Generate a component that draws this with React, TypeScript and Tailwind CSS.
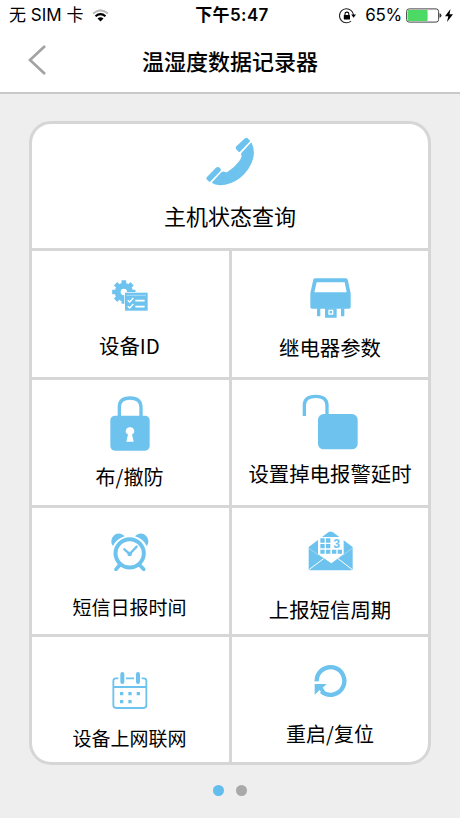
import type { ReactNode } from "react";

const BLUE = "#6dc3ee";

function PhoneIcon() {
    return (
        <svg className="w-[49px] h-[49px]" viewBox="48 51 147 147" fill={BLUE}>
            <path d="M184 67Q196 88 189 117Q180 149 150 174Q121 196 90 196Q74 195 65 188L94 157Q99 153 105 156Q111 158 117 152Q132 144 142 130Q154 117 155 108Q151 103 156 97Z" />
            <path d="M138 87Q135 83 139 79L165 55Q169 51 173 55L181 63L150 95Q147 97 144 94Z" />
            <path d="M51 179Q47 175 51 171L77 144Q83 138 89 143L92 147Q94 150 91 154L62 184Q59 187 56 184Z" />
        </svg>
    );
}

function DeviceIcon() {
    const teeth = [0, 45, 90, 135, 180, 225, 270, 315];
    return (
        <svg className="w-9 h-[31px]" viewBox="65 44 108 93">
            {teeth.map(a => (
                <rect key={a} x="93.5" y="45" width="14" height="14" rx="1" fill={BLUE} transform={`rotate(${a} 100.5 80)`} />
            ))}
            <circle cx="100.5" cy="80" r="18.5" fill="none" stroke={BLUE} strokeWidth="18" />
            <rect x="102" y="80" width="70" height="56" fill="#fff" />
            <rect x="104" y="82" width="68" height="54" fill={BLUE} />
            <path d="M108 90H167" stroke="#c9e9f9" strokeWidth="2" />
            <path d="M135 106H163M135 124H163" stroke="#fff" strokeWidth="5" />
            <path d="M112 105L118 110L129 98M112 123L118 128L129 116" fill="none" stroke="#fff" strokeWidth="4" />
        </svg>
    );
}

function RelayIcon() {
    return (
        <svg className="w-[41px] h-10" viewBox="61 38 123 120" fill={BLUE}>
            <path fillRule="evenodd" d="M76 39H168Q174 39 175 46L183 84V125Q183 130 178 130H67Q62 130 62 125V84L70 46Q71 39 76 39ZM81 51L74 81H171L165 51Z" />
            <path d="M82 129H92V153H82ZM154 129H164V153H154Z" />
            <path fillRule="evenodd" d="M106 129H141V157H106ZM116 133V148H131V133Z" />
            <rect x="120" y="137" width="7" height="7" />
        </svg>
    );
}

function LockIcon() {
    return (
        <svg className="w-10 h-[55px]" viewBox="59 34 120 165">
            <path d="M87 97V67Q87 40 119 40T152 67V97" fill="none" stroke={BLUE} strokeWidth="10" />
            <rect x="60" y="93" width="118" height="105" rx="14" fill={BLUE} />
            <path d="M119 128A11 11 0 0 1 125 149L130 171H108L113 149A11 11 0 0 1 119 128Z" fill="#fff" />
        </svg>
    );
}

function UnlockIcon() {
    return (
        <svg className="w-14 h-14" viewBox="37 27 168 168">
            <path d="M44 93V61Q44 34 78 34T112 61V92" fill="none" stroke={BLUE} strokeWidth="10" />
            <rect x="85" y="87" width="119" height="106" rx="17" fill={BLUE} />
        </svg>
    );
}

function AlarmIcon() {
    return (
        <svg className="w-[38px] h-[38px]" viewBox="64 40 114 114">
            <path d="M70 79Q60 67 69 52Q78 40 92 42Q101 44 105 50Q81 57 70 79Z" fill={BLUE} />
            <path d="M171 79Q181 67 172 52Q163 40 149 42Q140 44 136 50Q160 57 171 79Z" fill={BLUE} />
            <circle cx="120" cy="101" r="42.5" fill="none" stroke={BLUE} strokeWidth="12" />
            <path d="M90 136L79 149M150 136L162 149" stroke={BLUE} strokeWidth="11" strokeLinecap="round" />
            <path d="M104 89L120 103L141 81" fill="none" stroke={BLUE} strokeWidth="7" strokeLinecap="round" />
            <circle cx="120" cy="103" r="7" fill={BLUE} />
        </svg>
    );
}

function MailIcon() {
    return (
        <svg className="w-[45px] h-10" viewBox="53 34 135 120" fill={BLUE}>
            <path d="M55 82L114 38Q121 33 128 38L187 82V147Q187 152 182 152H60Q55 152 55 147Z" />
            <path d="M83 52H160V104L123 131L83 104Z" fill="#fff" />
            <path d="M57 149L100 117M185 149L143 117" stroke="#fff" strokeWidth="3" />
            <path d="M56 86L84 106M186 86L158 106" stroke="#fff" strokeWidth="2" opacity=".5" />
            <path d="M90 56H103V69H90ZM107 56H120V69H107ZM90 73H103V86H90ZM107 73H120V86H107ZM90 90H103V102H90ZM107 90H120V102H107ZM125 90H138V102H125ZM142 90H155V102H142Z" />
            <text x="129" y="84" fontSize="37" fontWeight="700" fontFamily="Liberation Sans, sans-serif">3</text>
        </svg>
    );
}

function CalendarIcon() {
    return (
        <svg className="w-9 h-[38px]" viewBox="65 52 108 114" fill="none" stroke={BLUE} strokeWidth="5.5">
            <path d="M84 71H76Q69 71 69 79V152Q69 160 77 160H160Q168 160 168 152V79Q168 71 161 71H154M107 71H131M69 97H168" />
            <path d="M96 58V82M143 58V82" strokeWidth="12" strokeLinecap="round" />
            <path d="M89 117H99M114 117H124M139 117H149M89 141H99M114 141H124" strokeWidth="10" />
        </svg>
    );
}

function RestartIcon() {
    return (
        <svg className="w-[33px] h-[34px]" viewBox="73 27 99 102">
            <path d="M81 79A41.5 41.5 0 1 1 95 109" fill="none" stroke={BLUE} strokeWidth="13" />
            <path d="M75 87H111L99 98L105 106L98 117L90 105L75 119Z" fill={BLUE} />
        </svg>
    );
}

function Tile({ icon, label, className, labelClass }: { icon: ReactNode; label: string; className: string; labelClass: string }) {
    return (
        <button className={`flex flex-col items-center bg-white overflow-hidden ${className}`}>
            {icon}
            <span className={`leading-7 whitespace-nowrap ${labelClass}`}>{label}</span>
        </button>
    );
}

function StatusBar() {
    return (
        <div className="h-[31px] grid grid-cols-[1fr_auto_1fr] items-center pl-[9px] pr-[7px] text-[17px]">
            <div className="flex items-center">
                <span>无 SIM 卡</span>
                <svg className="w-[17px] h-[13px] ml-[9px]" viewBox="0 0 17 13" fill="none" strokeWidth="2">
                    <path d="M1 4.6Q8.5-1.9 16 4.6" stroke="#bbb" />
                    <path d="M3.5 7.3Q8.5 2.9 13.5 7.3" stroke="#000" />
                    <path d="M5.5 9.5Q8.5 7 11.5 9.5L8.5 12.6Z" fill="#000" />
                </svg>
            </div>
            <span className="font-semibold tracking-[0.4px] pl-0.5">下午5:47</span>
            <div className="flex items-center justify-end">
                <svg className="w-[17px] h-4 mr-[9px]" viewBox="0 0 17 16">
                    <path d="M12 2.4A7 7 0 1 0 12 13.1M12 2.4Q14.3 4.3 14.5 7" fill="none" stroke="#222" strokeWidth="1.1" />
                    <path d="M12.2 6.5H17L14.6 9.7Z" />
                    <rect x="4.8" y="7" width="6.2" height="4.5" rx=".5" />
                    <path d="M6 7.3V5.8Q6 4.1 7.9 4.1T9.8 5.8V7.3" fill="none" stroke="#000" strokeWidth="1.1" />
                </svg>
                <span className="tracking-[-0.3px]">65%</span>
                <svg className="w-[36px] h-[15px] ml-1" viewBox="0 0 36 15">
                    <rect x=".6" y=".9" width="32" height="13.2" rx="2.5" fill="#fff" stroke="#444" />
                    <rect x="1.6" y="1.9" width="20" height="11.2" rx="1" fill="#4cd964" />
                    <path d="M33.5 5.2Q35.5 5.5 35.5 7.5T33.5 9.8Z" fill="#333" />
                </svg>
                <svg className="w-2 h-[13px] ml-[3px]" viewBox="0 0 8 13">
                    <path d="M5.5 0L0 7.3H3.3L2 13L8 5.3H4.5Z" />
                </svg>
            </div>
        </div>
    );
}

export default function App() {
    return (
        <div className="min-h-screen bg-[#eeeeee] text-black font-['Inter','Noto_Sans_CJK_SC',sans-serif]">
            <header className="h-[94px] bg-white border-b-2 border-[#c9c9c9]">
                <StatusBar />
                <div className="h-[58px] grid grid-cols-[80px_1fr_80px] items-center">
                    <svg className="w-[18px] h-[30px] ml-[28px]" viewBox="0 0 18 30">
                        <path d="M17 1L2 15L17 29" fill="none" stroke="#a3a3a3" strokeWidth="2.7" />
                    </svg>
                    <h1 className="text-center text-[22px] leading-8 font-medium font-['Noto_Sans_CJK_SC',sans-serif]">温湿度数据记录器</h1>
                </div>
            </header>

            <main className="pt-[27px] px-[29px]">
                <div className="grid grid-cols-[197px_196px] grid-rows-[124px_126px_125px_126px_125px] gap-[3px] h-[644px] border-[3px] border-[#d6d6d6] bg-[#d6d6d6] rounded-[22px] overflow-hidden font-['Noto_Sans_CJK_SC',sans-serif]">
                    <Tile className="col-span-2 pt-[13px]" icon={<PhoneIcon />} label="主机状态查询" labelClass="mt-[15px] text-[22px]" />
                    <Tile className="pt-[29px] pr-0.5" icon={<DeviceIcon />} label="设备ID" labelClass="mt-5 text-[20.4px]" />
                    <Tile className="pt-[27px]" icon={<RelayIcon />} label="继电器参数" labelClass="mt-[15px] text-[20.4px]" />
                    <Tile className="pt-4 pr-0.5" icon={<LockIcon />} label="布/撤防" labelClass="mt-3 text-[20px]" />
                    <Tile className="pt-3.5" icon={<UnlockIcon />} label="设置掉电报警延时" labelClass="mt-[9px] text-[20.4px]" />
                    <Tile className="pt-[25px] pr-0.5" icon={<AlarmIcon />} label="短信日报时间" labelClass="mt-[22px] text-[19px]" />
                    <Tile className="pt-[23px]" icon={<MailIcon />} label="上报短信周期" labelClass="mt-6 text-[20.4px]" />
                    <Tile className="pt-[35px] pr-0.5" icon={<CalendarIcon />} label="设备上网联网" labelClass="mt-3.5 text-[19px]" />
                    <Tile className="pt-[27px]" icon={<RestartIcon />} label="重启/复位" labelClass="mt-[22px] text-[20px]" />
                </div>

                {/* Page dots */}
                <div className="flex justify-center gap-3 mt-5">
                    <span className="w-[11px] h-[11px] rounded-full bg-[#62bcec]" />
                    <span className="w-[11px] h-[11px] rounded-full bg-[#a9a9a9]" />
                </div>
            </main>
        </div>
    );
}
